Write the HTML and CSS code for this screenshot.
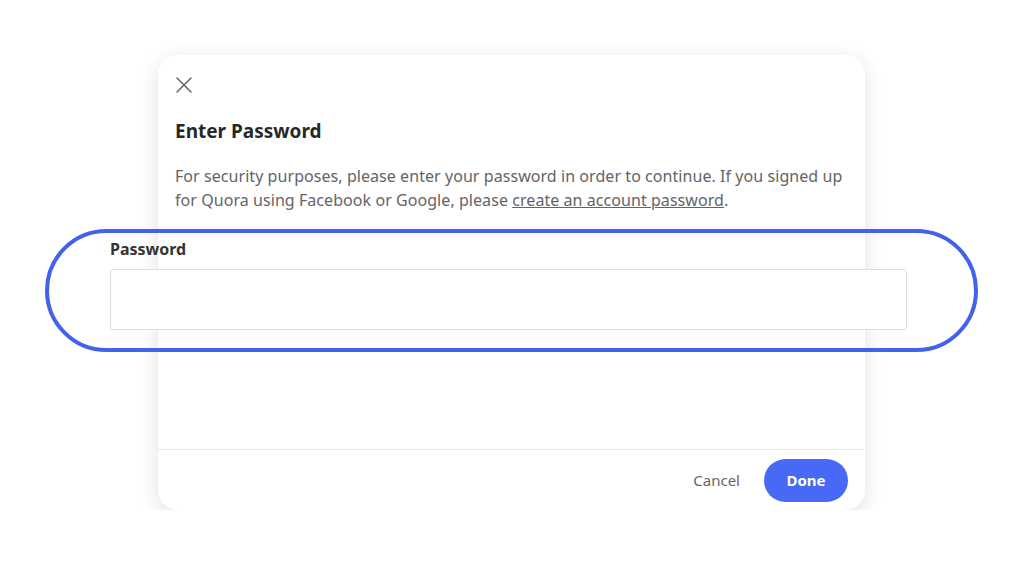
FILE: index.html
```html
<!DOCTYPE html>
<html lang="en">
<head>
    <meta charset="UTF-8">
    <meta name="viewport" content="width=device-width, initial-scale=1.0">
    <title>Enter Password</title>
    <link rel="stylesheet" href="styles.css">
</head>
<body>

    <div class="modal">
        <div class="modal-body">
            <button type="button" class="close-btn" aria-label="Close">
                <svg width="18" height="18" viewBox="0 0 18 18">
                    <path d="M2 2 L16 16 M16 2 L2 16" stroke="#666" stroke-width="1.5" fill="none" stroke-linecap="round"/>
                </svg>
            </button>
            <h2>Enter Password</h2>
            <p>For security purposes, please enter your password in order to continue. If you signed up for Quora using Facebook or Google, please <a href="#">create an account password</a>.</p>
        </div>
        <div class="modal-footer">
            <button type="button" class="cancel-btn">Cancel</button>
            <button type="button" class="done-btn">Done</button>
        </div>
    </div>

    <div class="callout">
        <label for="password">Password</label>
        <input type="password" id="password" name="password">
    </div>

</body>
</html>
```

FILE: styles.css
```css
body {
    font-family: "Noto Sans", "Open Sans", sans-serif;
    background-color: #fff;
    color: #282829;
    margin: 0;
    padding: 55px 0 0 158px;
}
.modal {
    width: 707px;
    height: 455px;
    border-radius: 20px;
    background-color: #fff;
    box-shadow: 0 5px 20px rgba(0, 0, 0, 0.12);
    display: flex;
    flex-direction: column;
    box-sizing: border-box;
}
.modal-body {
    flex: 1;
    padding: 21px 17px 0;
    border-bottom: 1px solid #e6e6e6;
}
.close-btn {
    background: none;
    border: none;
    padding: 0;
    width: 18px;
    height: 18px;
    cursor: pointer;
    display: block;
}
h2 {
    font-size: 19px;
    font-weight: 700;
    margin: 25px 0 0;
    line-height: 24px;
}
p {
    font-size: 16px;
    line-height: 24px;
    letter-spacing: 0.06px;
    color: #636466;
    margin: 21px 0 0;
}
p a {
    color: #636466;
}
.modal-footer {
    height: 60px;
    display: flex;
    align-items: center;
    justify-content: flex-end;
    gap: 24px;
    padding-right: 17px;
}
.cancel-btn {
    background: none;
    border: none;
    font-family: inherit;
    font-size: 15px;
    color: #666;
    padding: 0;
    cursor: pointer;
}
.done-btn {
    background-color: #4869f5;
    border: none;
    border-radius: 22px;
    color: #fff;
    font-family: inherit;
    font-size: 15px;
    font-weight: 700;
    width: 84px;
    height: 43px;
    cursor: pointer;
}
.callout {
    position: absolute;
    left: 45px;
    top: 229px;
    width: 933px;
    height: 123px;
    border: 4px solid #4262ea;
    border-radius: 62px;
    box-sizing: border-box;
    padding: 6px 67px 0 61px;
}
.callout label {
    display: block;
    font-size: 16px;
    font-weight: 700;
    color: #333;
    line-height: 20px;
}
.callout input {
    display: block;
    width: 100%;
    height: 61px;
    margin-top: 10px;
    border: 1px solid #dedede;
    border-radius: 3px;
    box-sizing: border-box;
    background: #fff;
}
```
